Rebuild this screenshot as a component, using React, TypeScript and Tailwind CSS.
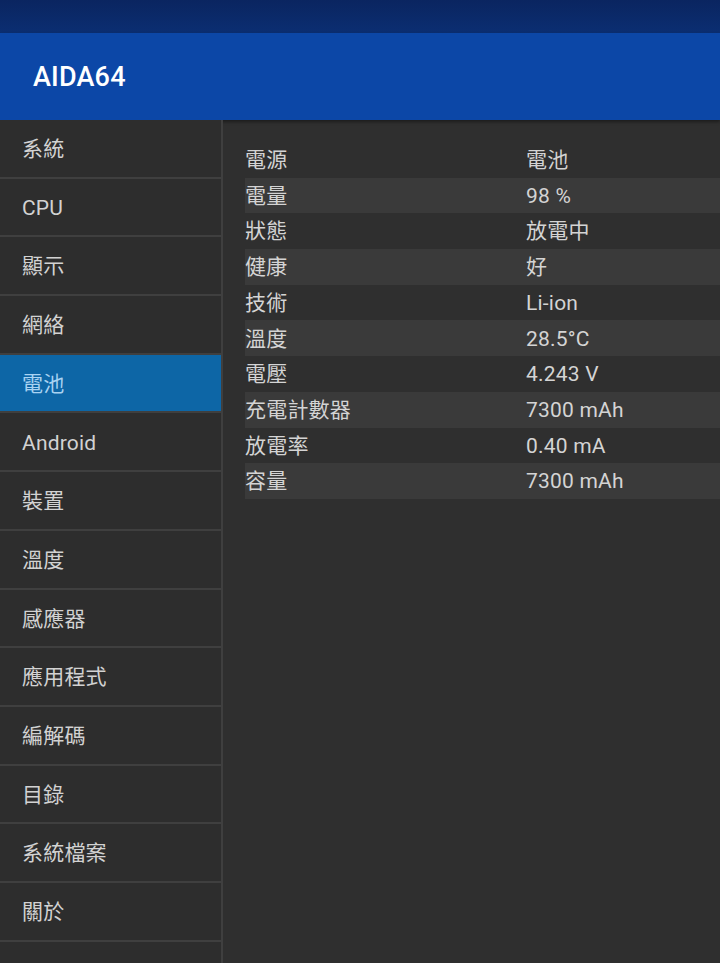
import React from 'react';

const font = { fontFamily: 'Roboto, "Noto Sans CJK TC", sans-serif' };

const navItems = [
  '系統',
  'CPU',
  '顯示',
  '網絡',
  '電池',
  'Android',
  '裝置',
  '溫度',
  '感應器',
  '應用程式',
  '編解碼',
  '目錄',
  '系統檔案',
  '關於',
];

const rows: [string, string][] = [
  ['電源', '電池'],
  ['電量', '98 %'],
  ['狀態', '放電中'],
  ['健康', '好'],
  ['技術', 'Li-ion'],
  ['溫度', '28.5°C'],
  ['電壓', '4.243 V'],
  ['充電計數器', '7300 mAh'],
  ['放電率', '0.40 mA'],
  ['容量', '7300 mAh'],
];

export default function App() {
  return (
    <div className="flex h-[963px] w-[720px] flex-col overflow-hidden bg-[#2f2f2f]" style={font}>
      {/* status bar */}
      <div className="h-[33px] bg-gradient-to-b from-[#0a2560] to-[#0b2e72]" />

      {/* header */}
      <div className="flex h-[87px] items-center bg-[#0c47a7] px-[33px] pt-[2px] shadow-[0_2px_3px_rgba(0,0,0,0.4)]">
        <span className="text-[27px] font-medium tracking-[0.2px] text-white">AIDA64</span>
      </div>

      <div className="flex flex-1">
        {/* sidebar */}
        <div className="flex w-[223px] flex-col border-r-2 border-[#3f3f3f] bg-[#2d2d2d]">
          {navItems.map((item) => {
            const active = item === '電池';
            return (
              <div
                key={item}
                className={
                  active
                    ? 'flex h-[58.7px] items-center border-b-2 border-[#3f3f3f] bg-[#0d66a6] pl-[22px] pt-[3px] text-[21px] tracking-[0.2px] text-[#a9d3f2]'
                    : 'flex h-[58.7px] items-center border-b-2 border-[#3f3f3f] pl-[22px] pt-[3px] text-[21px] tracking-[0.2px] text-[#d2d2d2]'
                }
              >
                {item}
              </div>
            );
          })}
        </div>

        {/* details */}
        <div className="flex-1 pl-[22px] pt-[22px]">
          {rows.map(([label, value], i) => (
            <div
              key={label}
              className={
                i % 2 === 1
                  ? 'flex h-[35.7px] items-center bg-[#3a3a3a] pt-[2px] text-[21px] tracking-[0.2px] text-[#d4d4d4]'
                  : 'flex h-[35.7px] items-center pt-[2px] text-[21px] tracking-[0.2px] text-[#d4d4d4]'
              }
            >
              <span className="w-[281px] shrink-0">{label}</span>
              <span>{value}</span>
            </div>
          ))}
        </div>
      </div>
    </div>
  );
}
